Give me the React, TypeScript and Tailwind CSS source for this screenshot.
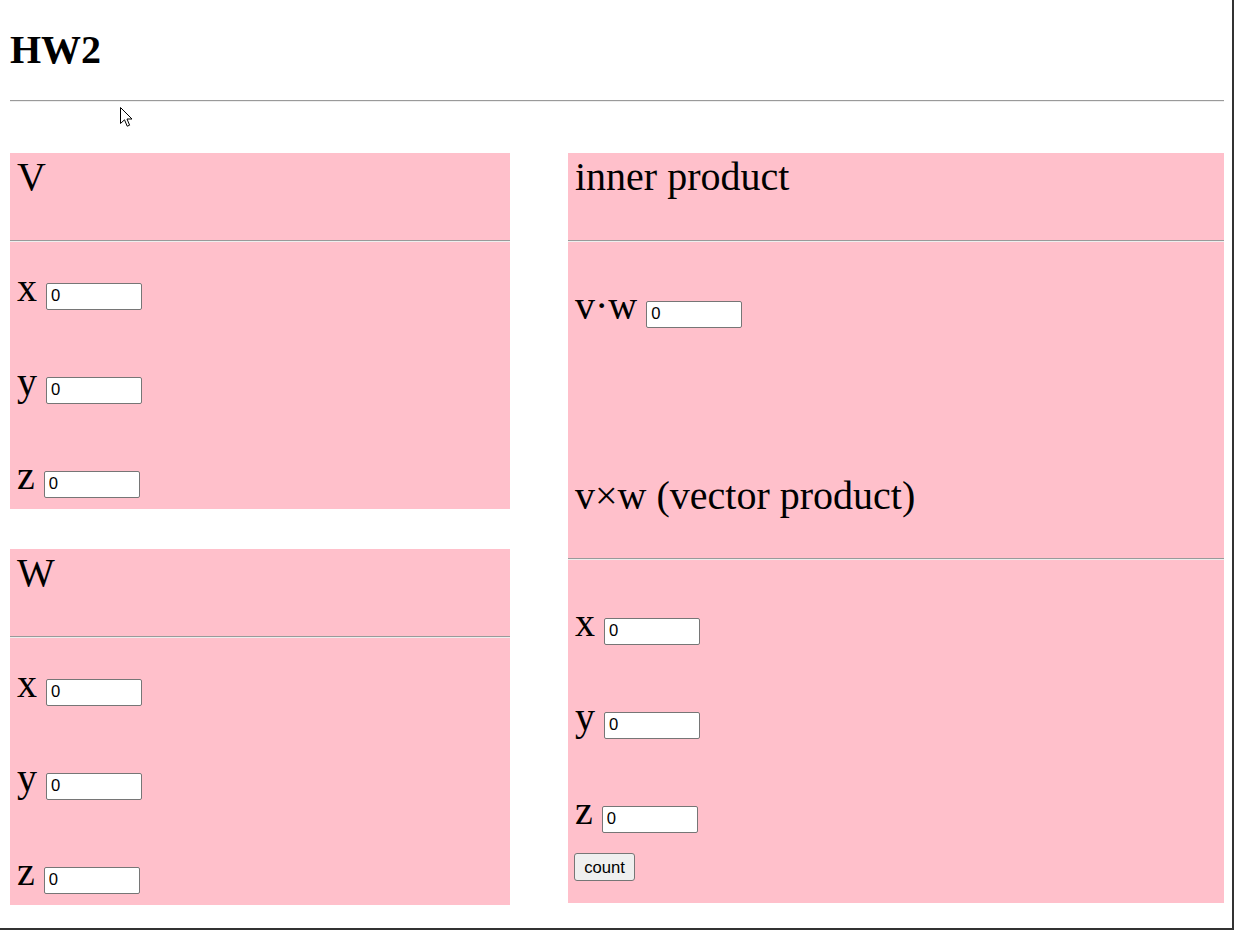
const serif = "font-['Liberation_Serif','Times_New_Roman',serif]";

function Rule() {
  return <div className="h-[2px] border-t border-b border-t-[#9a9a9a] border-b-[#eeeeee]" />;
}

function NumField({ className = "" }: { className?: string }) {
  return (
    <input
      type="text"
      defaultValue="0"
      className={`-ml-px h-[27px] w-[96px] rounded-[2px] border border-[#767676] bg-white px-[4px] align-baseline font-['Liberation_Sans',Arial,sans-serif] text-[16.67px] leading-normal text-black ${className}`}
    />
  );
}

function Coords() {
  return (
    <div className="flex flex-col gap-[50px]">
      {["x", "y", "z"].map((axis) => (
        <div key={axis} className="pl-[7px] text-[40px] leading-[44px]">
          {axis} <NumField />
        </div>
      ))}
    </div>
  );
}

function VectorBox({ name }: { name: string }) {
  return (
    <section className="h-[356px] bg-[#ffc0cb]">
      <div className="h-[87px] pt-[2px] pl-[7px] text-[40px] leading-[44px]">{name}</div>
      <Rule />
      <div className="pt-[24px]">
        <Coords />
      </div>
    </section>
  );
}

function Cursor() {
  return (
    <svg className="absolute left-[120px] top-[107px]" width="13" height="21" viewBox="0 0 13 21">
      <path
        d="M0.5 0.5 L0.5 16.5 L4.5 12.8 L7.2 19.2 L9.6 18.2 L7 12 L12 12 Z"
        fill="#fff"
        stroke="#000"
        strokeWidth="1"
        strokeLinejoin="miter"
      />
    </svg>
  );
}

export default function App() {
  return (
    <div className={`relative h-[930px] w-[1234px] overflow-hidden border-r-2 border-b-2 border-[#333333] bg-white pl-[10px] pr-[8px] text-black ${serif}`}>
      <h1 className="mt-[27px] text-[40px] font-bold leading-[46px]">HW2</h1>
      <div className="mt-[27px]">
        <Rule />
      </div>

      <div className="mt-[51px] flex gap-[58px]">
        <div className="flex w-[500px] flex-col gap-[40px]">
          <VectorBox name="V" />
          <VectorBox name="W" />
        </div>

        <section className="h-[750px] w-[656px] bg-[#ffc0cb]">
          <div className="h-[87px] pt-[2px] pl-[7px] text-[40px] leading-[44px]">inner product</div>
          <Rule />
          <div className="pt-[42px] pl-[7px] text-[40px] leading-[44px]">
            v·w <NumField />
          </div>
          <div className="mt-[144px] h-[86px] pt-[2px] pl-[7px] text-[40px] leading-[44px]">v×w (vector product)</div>
          <Rule />
          <div className="pt-[41px]">
            <Coords />
          </div>
          <button
            type="button"
            className="mt-[20px] ml-[6px] block h-[28px] w-[61px] rounded-[3px] border border-[#767676] bg-[#efefef] font-['Liberation_Sans',Arial,sans-serif] text-[16.67px] leading-normal text-black"
          >
            count
          </button>
        </section>
      </div>

      <Cursor />
    </div>
  );
}
